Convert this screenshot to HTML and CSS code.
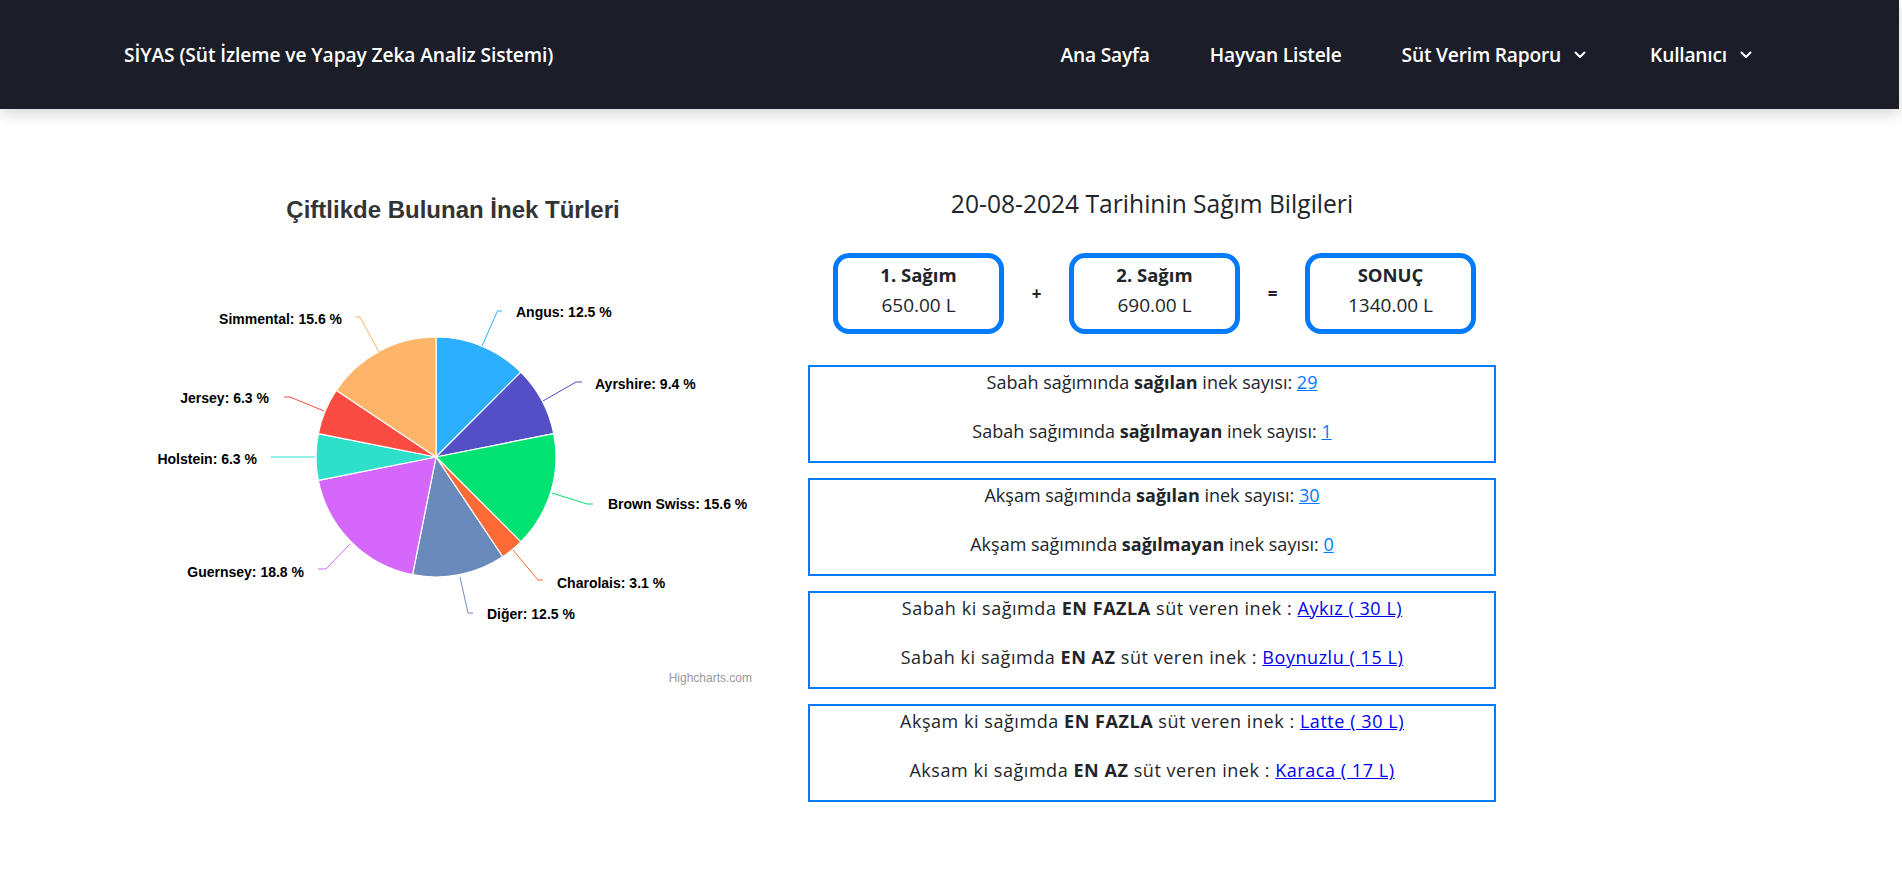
FILE: index.html
```html
<!DOCTYPE html>
<html lang="tr">
<head>
<meta charset="utf-8">
<title>SİYAS</title>
<link rel="stylesheet" href="styles.css">
</head>
<body>
<div class="page">
  <header class="navbar">
    <div class="brand">SİYAS (Süt İzleme ve Yapay Zeka Analiz Sistemi)</div>
    <nav class="nav">
      <a class="nav-link" href="#">Ana Sayfa</a>
      <a class="nav-link" href="#">Hayvan Listele</a>
      <a class="nav-link dropdown" href="#">Süt Verim Raporu <svg class="chev" width="12" height="8" viewBox="0 0 12 8"><path d="M1.5 1.5 L6 6 L10.5 1.5" fill="none" stroke="#fff" stroke-width="2" stroke-linecap="round" stroke-linejoin="round"/></svg></a>
      <a class="nav-link dropdown" href="#">Kullanıcı <svg class="chev" width="12" height="8" viewBox="0 0 12 8"><path d="M1.5 1.5 L6 6 L10.5 1.5" fill="none" stroke="#fff" stroke-width="2" stroke-linecap="round" stroke-linejoin="round"/></svg></a>
    </nav>
  </header>

  <main class="main">
    <section class="chart-col">
      <svg class="chart" width="618" height="530" viewBox="0 0 618 530">
        <text class="c-title" x="309" y="48" text-anchor="middle">Çiftlikde Bulunan İnek Türleri</text>
        <g class="slices" stroke="#fff" stroke-width="1.2" stroke-linejoin="round">
          <path fill="#2caffe" d="M292 287 L292 167 A120 120 0 0 1 376.85 202.15 Z"/>
          <path fill="#544fc5" d="M292 287 L376.85 202.15 A120 120 0 0 1 409.69 263.59 Z"/>
          <path fill="#00e272" d="M292 287 L409.69 263.59 A120 120 0 0 1 376.85 371.85 Z"/>
          <path fill="#fe6a35" d="M292 287 L376.85 371.85 A120 120 0 0 1 358.67 386.78 Z"/>
          <path fill="#6b8abc" d="M292 287 L358.67 386.78 A120 120 0 0 1 268.59 404.69 Z"/>
          <path fill="#d568fb" d="M292 287 L268.59 404.69 A120 120 0 0 1 174.31 310.41 Z"/>
          <path fill="#2ee0ca" d="M292 287 L174.31 310.41 A120 120 0 0 1 174.31 263.59 Z"/>
          <path fill="#fa4b42" d="M292 287 L174.31 263.59 A120 120 0 0 1 192.22 220.33 Z"/>
          <path fill="#feb56a" d="M292 287 L192.22 220.33 A120 120 0 0 1 292 167 Z"/>
        </g>
        <g class="connectors" fill="none" stroke-width="1">
          <polyline stroke="#2caffe" points="338,176 353.5,141 358,141"/>
          <polyline stroke="#544fc5" points="399,231 432,212 438,212"/>
          <polyline stroke="#00e272" points="408,323 443,334 449,334"/>
          <polyline stroke="#fe6a35" points="369,380 394,410 399,410"/>
          <polyline stroke="#6b8abc" points="316,407 324,443 329,443"/>
          <polyline stroke="#d568fb" points="206,374 182,399 174,399"/>
          <polyline stroke="#2ee0ca" points="171,287 127,287"/>
          <polyline stroke="#fa4b42" points="180,241 146,227 140,227"/>
          <polyline stroke="#feb56a" points="235,182 216,147 211.5,147"/>
        </g>
        <g class="labels">
          <text x="372" y="147">Angus: 12.5 %</text>
          <text x="451" y="219">Ayrshire: 9.4 %</text>
          <text x="464" y="339">Brown Swiss: 15.6 %</text>
          <text x="413" y="418">Charolais: 3.1 %</text>
          <text x="343" y="449">Diğer: 12.5 %</text>
          <text x="160" y="407" text-anchor="end">Guernsey: 18.8 %</text>
          <text x="113" y="294" text-anchor="end">Holstein: 6.3 %</text>
          <text x="125" y="233" text-anchor="end">Jersey: 6.3 %</text>
          <text x="198" y="154" text-anchor="end">Simmental: 15.6 %</text>
        </g>
        <text class="credits" x="608" y="512" text-anchor="end">Highcharts.com</text>
      </svg>
    </section>

    <section class="info-col">
      <h4 class="heading">20-08-2024 Tarihinin Sağım Bilgileri</h4>
      <div class="sum-row">
        <div class="sum-box"><div class="sum-title">1. Sağım</div><div class="sum-val">650.00 L</div></div>
        <div class="op">+</div>
        <div class="sum-box"><div class="sum-title">2. Sağım</div><div class="sum-val">690.00 L</div></div>
        <div class="op">=</div>
        <div class="sum-box"><div class="sum-title">SONUÇ</div><div class="sum-val">1340.00 L</div></div>
      </div>

      <div class="info-box">
        <p>Sabah sağımında <b>sağılan</b> inek sayısı: <a class="num" href="#">29</a></p>
        <p>Sabah sağımında <b>sağılmayan</b> inek sayısı: <a class="num" href="#">1</a></p>
      </div>
      <div class="info-box">
        <p>Akşam sağımında <b>sağılan</b> inek sayısı: <a class="num" href="#">30</a></p>
        <p>Akşam sağımında <b>sağılmayan</b> inek sayısı: <a class="num" href="#">0</a></p>
      </div>
      <div class="info-box wide">
        <p>Sabah ki sağımda <b>EN FAZLA</b> süt veren inek : <a class="cow" href="#">Aykız ( 30 L)</a></p>
        <p>Sabah ki sağımda <b>EN AZ</b> süt veren inek : <a class="cow" href="#">Boynuzlu ( 15 L)</a></p>
      </div>
      <div class="info-box wide">
        <p>Akşam ki sağımda <b>EN FAZLA</b> süt veren inek : <a class="cow" href="#">Latte ( 30 L)</a></p>
        <p>Aksam ki sağımda <b>EN AZ</b> süt veren inek : <a class="cow" href="#">Karaca ( 17 L)</a></p>
      </div>
    </section>
  </main>
</div>
</body>
</html>
```

FILE: styles.css
```css
html, body {
  margin: 0;
  padding: 0;
  background: #fff;
}
body {
  font-family: "Open Sans", "Noto Sans", sans-serif;
  color: #212529;
}
.page {
  margin-right: 3px;
}
.navbar {
  height: 109px;
  background: #1b1e28;
  display: flex;
  align-items: center;
  justify-content: space-between;
  padding: 0 117px 0 124px;
  box-shadow: 0 5px 14px rgba(0, 0, 0, 0.16);
  position: relative;
  z-index: 1;
}
.brand {
  color: #fff;
  font-weight: 600;
  font-size: 19.2px;
  letter-spacing: -0.1px;
}
.nav {
  display: flex;
  align-items: center;
}
.nav-link {
  color: #fff;
  text-decoration: none;
  font-weight: 600;
  font-size: 19.2px;
  letter-spacing: -0.2px;
  padding: 0 30px;
  display: flex;
  align-items: center;
}
.dropdown + .dropdown {
  margin-left: 4px;
}
.chev {
  margin-left: 13px;
  margin-top: 1px;
}
.main {
  display: flex;
  align-items: flex-start;
  padding: 61px 0 40px 144px;
  gap: 46px;
}
.chart-col {
  width: 618px;
  flex: none;
}
.chart {
  display: block;
  font-family: "Liberation Sans", Arial, sans-serif;
}
.c-title {
  font-size: 24px;
  font-weight: bold;
  fill: #333333;
}
.labels text {
  font-size: 14px;
  font-weight: bold;
  fill: #000;
  stroke: #fff;
  stroke-width: 2px;
  paint-order: stroke;
  stroke-linejoin: round;
}
.credits {
  font-size: 12px;
  fill: #999999;
}
.info-col {
  width: 688px;
  flex: none;
}
.heading {
  margin: 19px 0 0;
  font-size: 24.6px;
  font-weight: 500;
  line-height: 1.2;
  text-align: center;
  color: #212529;
}
.sum-row {
  display: flex;
  justify-content: center;
  margin: 34px 0 31px 5px;
}
.sum-box {
  width: 171px;
  height: 81px;
  box-sizing: border-box;
  border: 5px solid #007bff;
  border-radius: 16px;
  text-align: center;
  padding-top: 2px;
  line-height: 30px;
}
.sum-title {
  font-weight: 700;
  font-size: 18.5px;
}
.sum-val {
  font-size: 19px;
}
.op {
  width: 65px;
  text-align: center;
  font-weight: 700;
  font-size: 17px;
  line-height: 81px;
}
.info-box {
  border: 2px solid #007bff;
  height: 98px;
  box-sizing: border-box;
  margin-bottom: 15px;
  padding-top: 2.5px;
  text-align: center;
  font-size: 18px;
  line-height: 27px;
}
.info-box p {
  margin: 0 0 22px;
}
.info-box.wide p {
  letter-spacing: 0.55px;
}
.info-box b {
  font-weight: 700;
}
.num {
  color: #007bff;
}
.cow {
  color: #0000ee;
}
```
